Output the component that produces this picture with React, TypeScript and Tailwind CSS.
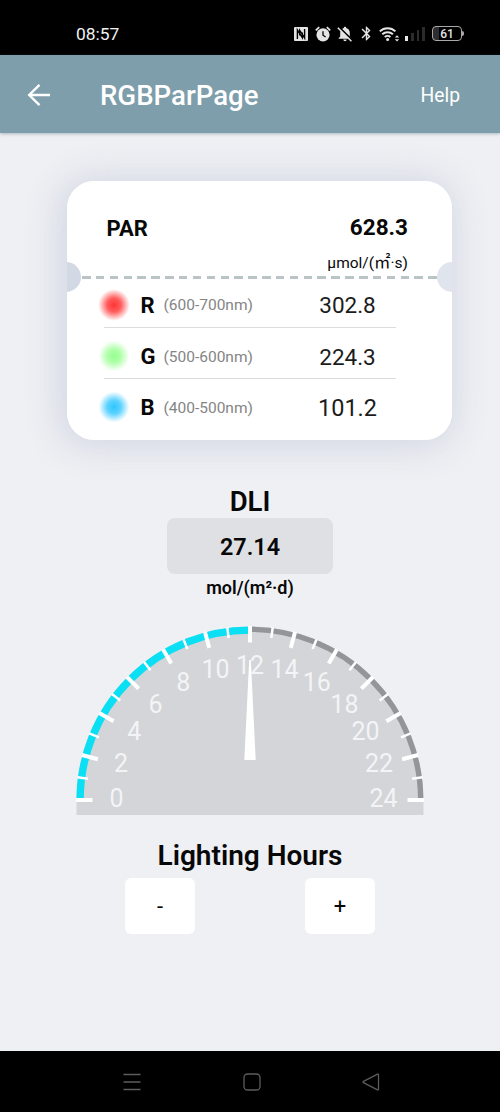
import React, { useState } from "react";
import { MdBluetooth } from "react-icons/md";

const bands = [
  {
    name: "R",
    range: "(600-700nm)",
    value: "302.8",
    dot: "bg-[radial-gradient(circle,#ff3434_0%,#ff5c5c_30%,#ffffff00_70%)]",
    valueClass: "text-[22.500px]",
  },
  {
    name: "G",
    range: "(500-600nm)",
    value: "224.3",
    dot: "bg-[radial-gradient(circle,#97fd8f_0%,#b0ffaa_30%,#ffffff00_68%)]",
    valueClass: "text-[22.500px]",
  },
  {
    name: "B",
    range: "(400-500nm)",
    value: "101.2",
    dot: "bg-[radial-gradient(circle,#2fc6ff_0%,#5dd2ff_30%,#ffffff00_68%)]",
    valueClass: "text-[23.500px]",
  },
];

const StatusBar = () => (
  <div className="h-[55px] bg-black flex items-start justify-between pl-[76px] pr-[36px] pt-[23px] text-[#e4e4e4]">
    <span className="text-[17.400px] leading-[22px] text-[#f1f1f1]">08:57</span>
    <div className="flex items-center h-[21px]">
      <svg className="w-[14px] h-[14px] mr-[7px]" viewBox="0 0 14 14">
        <rect width="14" height="14" rx="1" fill="currentColor" />
        <path d="M3.400 12V3L8.300 10.600V5.500M10.600 2v9L5.700 3.400v5.100" fill="none" stroke="#000" strokeWidth="1.400" />
      </svg>
      <svg className="w-[16px] h-[16px] mr-[6px]" viewBox="0 0 16 16">
        <circle cx="8" cy="8.800" r="6.600" fill="currentColor" />
        <path d="M.8 4.400 4.200 1.200M15.200 4.400l-3.400-3.200" stroke="currentColor" strokeWidth="1.800" />
        <path d="M8 5.200v4l2.600 1.800" stroke="#000" strokeWidth="1.300" fill="none" />
      </svg>
      <svg className="w-[16px] h-[16px] mr-[5px]" viewBox="0 0 16 16">
        <path
          d="M8 .8c.8 0 1.200.5 1.200 1.200 2.300.6 3.600 2.400 3.600 4.900v3.600l1.900 2.200H1.300l1.900-2.200V6.900c0-2.500 1.300-4.300 3.600-4.900C6.800 1.300 7.200.8 8 .8zM6.300 13.500h3.400a1.700 1.700 0 0 1-3.400 0z"
          fill="currentColor"
        />
        <path d="M1.800.8 15.800 14.600" stroke="#000" strokeWidth="1.800" />
        <path d="M.8 1.800 14.400 15.300" stroke="currentColor" strokeWidth="1.500" />
      </svg>
      <MdBluetooth className="w-[17px] h-[17px] mr-[4px]" />
      <svg className="w-[21px] h-[16px] mr-[5px]" viewBox="0 0 21 16">
        <g fill="none" stroke="currentColor" strokeWidth="2">
          <path d="M.8 5.400a11.300 11.300 0 0 1 15.600 0" />
          <path d="M3.300 8.300a7.600 7.600 0 0 1 10.600 0" />
          <path d="M5.800 11.100a4 4 0 0 1 5.600 0" />
        </g>
        <circle cx="8.600" cy="13.600" r="1.500" fill="currentColor" />
        <path d="M15.800 11.600 18 9.200l2.200 2.400zM15.800 13.200 18 15.600l2.200-2.400z" fill="currentColor" />
      </svg>
      <div className="flex items-end gap-[3px] h-[14px] w-[20px] mr-[7px]">
        <i className="w-[3px] h-[5px] bg-[#e8e8e8]" />
        <i className="w-[3px] h-[8px] bg-[#2b2b2b]" />
        <i className="w-[2px] h-[11px] bg-[#2b2b2b]" />
        <i className="w-[3px] h-[14px] bg-[#2b2b2b]" />
      </div>
      <div className="w-[30px] h-[15px] border border-[#a9a9a9] rounded-[4px] bg-[linear-gradient(90deg,#2e2e2e_20%,#000_20%)] flex items-center justify-center text-[12px] leading-none font-medium">
        61
      </div>
      <i className="w-[2px] h-[5px] bg-[#a9a9a9] rounded-r" />
    </div>
  </div>
);

const Header = () => (
  <div className="h-[78px] bg-[#7e9eab] flex items-center text-white pl-[27px] pr-[40px] pt-[2px] shadow-[0_1px_3px_rgba(90,110,125,0.45)]">
    <svg className="w-6 h-6 -mt-px" viewBox="0 0 24 24" fill="none" stroke="currentColor" strokeWidth="2.400">
      <path d="M23 12H2.500M12.500 1.800 2.200 12l10.300 10.200" />
    </svg>
    <h1 className="ml-[49px] mt-px text-[27.600px] font-medium leading-none flex-1">RGBParPage</h1>
    <span className="mt-[2px] text-[19.300px] leading-none">Help</span>
  </div>
);

const ParCard = () => (
  <div className="ml-[66.500px] mt-[47.500px] w-[385.500px] h-[259px] rounded-[27px] shadow-[-3px_2px_34px_6px_rgba(182,191,209,0.48)]">
    <div className="relative w-full h-full rounded-[27px] bg-white overflow-hidden">
      <i className="absolute -left-[15.500px] top-[81.500px] w-[30px] h-[30px] rounded-full bg-[#d3d9e4]" />
      <i className="absolute -right-[15px] top-[81.500px] w-[30px] h-[30px] rounded-full bg-[#e0e4ed]" />
      <div className="h-[95px] flex justify-between pl-[40px] pr-[44px]">
        <span className="mt-[36px] text-[22px] leading-[24px] font-bold">PAR</span>
        <div className="flex flex-col items-end mt-[34px]">
          <span className="text-[22.500px] leading-[24px] font-bold">628.3</span>
          <span className="mt-[14px] text-[15.500px] leading-[20px] font-[Roboto,'Noto_Sans_CJK_SC',sans-serif]">
            μmol/(<span className="text-[16.500px]">㎡</span>·s)
          </span>
        </div>
      </div>
      <div className="mx-[15px] h-[3px] bg-[repeating-linear-gradient(90deg,#bac4c7_0_8.500px,transparent_8.500px_13.850px)]" />
      <div className="pl-[31.500px] flex flex-col">
        {bands.map((b, i) => (
          <div key={b.name}>
            {i > 0 && <div className="ml-[6px] w-[292px] h-px bg-[#dcdcdf]" />}
            <div className={i === 0 ? "flex items-center h-[48px] pt-[6px]" : "flex items-center h-[50.500px] pt-[8px]"}>
              <i className={"w-[32px] h-[32px] -mt-[2px] rounded-full " + b.dot} />
              <b className="ml-[10.500px] w-[23px] text-[22px] leading-none">{b.name}</b>
              <span className="mt-px w-[147px] text-[15.500px] leading-none text-[#858585]">{b.range}</span>
              <span className={"w-[74px] text-center leading-none text-[#1c1c1c] " + b.valueClass}>{b.value}</span>
            </div>
          </div>
        ))}
      </div>
    </div>
  </div>
);

const Gauge = ({ hours }: { hours: number }) => {
  const cx = 174;
  const cy = 174;
  const point = (h: number, r: number) => {
    const a = Math.PI * (1 - h / 24);
    return [cx + r * Math.cos(a), cy - r * Math.sin(a)];
  };
  const arc = (from: number, to: number, r: number) => {
    const [x1, y1] = point(from, r);
    const [x2, y2] = point(to, r);
    return `M${x1} ${y1}A${r} ${r} 0 0 1 ${x2} ${y2}`;
  };

  return (
    <svg className="w-[348px] h-[190px]" viewBox="0 0 348 190">
      <path d="M.5 189V174a173.500 173.500 0 0 1 347 0v15z" fill="#d4d5d8" />
      <path d={arc(hours, 24, 170.700)} fill="none" stroke="#939599" strokeWidth="5.400" />
      <path d={arc(0, hours, 169.900)} fill="none" stroke="#0bdff4" strokeWidth="7.400" />
      {Array.from({ length: 25 }, (_, h) => {
        const major = h % 2 === 0;
        const [x1, y1] = point(h, 174);
        const [x2, y2] = point(h, major ? 157.5 : 163.5);
        return <line key={h} x1={x1} y1={y1} x2={x2} y2={y2} stroke="#fff" strokeWidth={major ? 4 : 2.5} />;
      })}
      {Array.from({ length: 13 }, (_, i) => {
        const [x, y] = point(i * 2, 133.5);
        return (
          <text key={i} x={x} y={y + 7} textAnchor="middle" fontSize="25" fill="#f3f4f6">
            {i * 2}
          </text>
        );
      })}
      <path
        d="M173.200 34h1.600l4.900 100h-11.400z"
        fill="#fff"
        transform={`rotate(${(hours - 12) * 7.5} ${cx} ${cy})`}
      />
    </svg>
  );
};

const App = () => {
  const [hours, setHours] = useState(12);

  return (
    <div className="w-[500px] h-[1112px] bg-[#eff0f4] flex flex-col text-[#080808] font-[Roboto,sans-serif] overflow-hidden">
      <StatusBar />
      <Header />
      <ParCard />
      <div className="flex flex-col items-center mt-[45.500px]">
        <h2 className="text-[27.500px] leading-[33px] font-semibold">DLI</h2>
        <div className="w-[166px] h-[56px] rounded-[8px] bg-[#dfe0e3] flex items-center justify-center text-[23.400px] font-semibold pt-[4px]">
          27.14
        </div>
        <span className="mt-[3px] text-[18px] leading-[22px] font-semibold">mol/(m²·d)</span>
        <div className="mt-[27px]">
          <Gauge hours={hours} />
        </div>
        <h2 className="mt-[23px] text-[28px] leading-[33px] font-semibold">Lighting Hours</h2>
        <div className="mt-[6px] w-[250px] flex justify-between">
          <button
            className="w-[70px] h-[56px] rounded-[6px] bg-white text-[22px]"
            onClick={() => setHours(Math.max(0, hours - 1))}
          >
            -
          </button>
          <button
            className="w-[70px] h-[56px] rounded-[6px] bg-white text-[22px]"
            onClick={() => setHours(Math.min(24, hours + 1))}
          >
            +
          </button>
        </div>
      </div>
      <div className="mt-auto h-[61px] bg-black flex items-center justify-between pl-[123px] pr-[120px] text-[#5c5c5c]">
        <svg className="w-[18px] h-[18px]" viewBox="0 0 18 18" fill="none" stroke="currentColor" strokeWidth="1.300">
          <path d="M.5 1.500h17M.5 9h17M.5 16.500h17" />
        </svg>
        <svg className="w-[18px] h-[18px]" viewBox="0 0 18 18" fill="none" stroke="currentColor" strokeWidth="1.300">
          <rect x="1" y="1" width="16" height="16" rx="3.500" />
        </svg>
        <svg className="w-[18px] h-[18px]" viewBox="0 0 18 18" fill="none" stroke="currentColor" strokeWidth="1.300" strokeLinejoin="round">
          <path d="M1.500 8.300 15.500 1.200q1-.4 1 .6v14.400q0 1-1 .6L1.500 9.700q-1-.7 0-1.400z" />
        </svg>
      </div>
    </div>
  );
};

export default App;
